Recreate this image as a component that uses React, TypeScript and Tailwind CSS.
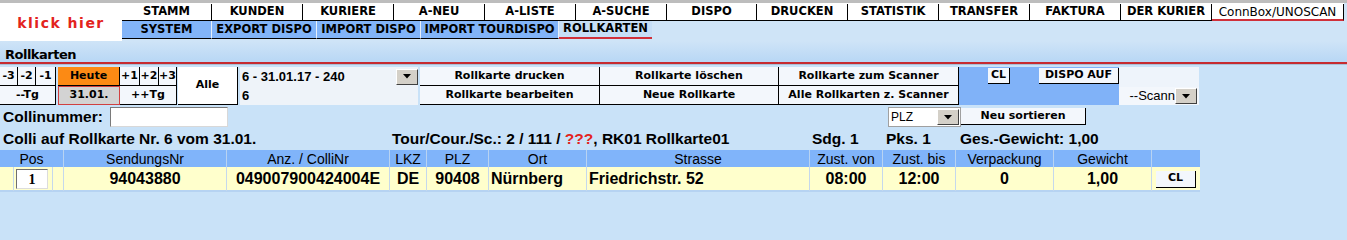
import React from "react";

const GRID =
  "grid grid-cols-[64px_163px_163px_37px_62px_98px_223px_73px_73px_98px_98px_48px]";

const Arrow = () => (
  <div className="flex h-[16px] w-[22px] shrink-0 items-center justify-center border border-t-white border-l-white border-r-[#404040] border-b-[#404040] bg-[#d4d0c8]">
    <svg width="8" height="5" viewBox="0 0 8 5">
      <polygon points="0,0 8,0 4,4.5" fill="#000" />
    </svg>
  </div>
);

const Btn = ({ children, className = "" }: { children?: React.ReactNode; className?: string }) => (
  <div
    className={`flex items-center justify-center bg-[#f3f7fc] border-r border-b border-black font-['DejaVu_Sans',sans-serif] font-bold text-[11px] text-black whitespace-nowrap ${className}`}
  >
    {children}
  </div>
);

const NAV1 = [
  { t: "STAMM", w: "w-[90px]" },
  { t: "KUNDEN", w: "w-[91px]" },
  { t: "KURIERE", w: "w-[91px]" },
  { t: "A-NEU", w: "w-[91px]" },
  { t: "A-LISTE", w: "w-[91px]" },
  { t: "A-SUCHE", w: "w-[91px]" },
  { t: "DISPO", w: "w-[90px]" },
  { t: "DRUCKEN", w: "w-[91px]" },
  { t: "STATISTIK", w: "w-[91px]" },
  { t: "TRANSFER", w: "w-[91px]" },
  { t: "FAKTURA", w: "w-[91px]" },
  { t: "DER KURIER", w: "w-[91px]" },
];

const NAV2 = [
  { t: "SYSTEM", w: "w-[90px]" },
  { t: "EXPORT DISPO", w: "w-[105px]" },
  { t: "IMPORT DISPO", w: "w-[104px]" },
  { t: "IMPORT TOURDISPO", w: "w-[138px]" },
];

const HEAD = [
  "Pos",
  "SendungsNr",
  "Anz. / ColliNr",
  "LKZ",
  "PLZ",
  "Ort",
  "Strasse",
  "Zust. von",
  "Zust. bis",
  "Verpackung",
  "Gewicht",
  "",
];

export default function App() {
  return (
    <div className="w-[1347px] h-[240px] overflow-hidden bg-[#c9e2f8] font-['Liberation_Sans',Arial,sans-serif] text-black">
      <div className="h-[3px] bg-[#bdbdbd]" />

      {/* header with logo and menu */}
      <div className="flex bg-[#cfe4f7]">
        <div className="flex h-[38px] w-[122px] items-center justify-center bg-white pt-[3px] font-['DejaVu_Sans',sans-serif] text-[14px] font-bold tracking-[1.5px] text-[#e3231d]">
          klick hier
        </div>
        <div className="flex-1">
          <div className="h-[1px] w-[1222px] bg-white" />
          <div className="flex h-[17px] w-[1222px] bg-white font-['DejaVu_Sans',sans-serif] text-[11.5px] font-bold">
            {NAV1.map((n) => (
              <div key={n.t} className={`${n.w} flex items-center justify-center border-r border-b border-black`}>
                {n.t}
              </div>
            ))}
            <div className="flex w-[132px] items-center justify-center border-r border-b-2 border-r-black border-b-[#d0303a] text-[12px] font-normal">
              ConnBox/UNOSCAN
            </div>
          </div>
          <div className="flex h-[18px] font-['DejaVu_Sans',sans-serif] text-[11.5px] font-bold">
            {NAV2.map((n) => (
              <div
                key={n.t}
                className={`${n.w} flex items-center justify-center border-r border-b border-r-[#e8f0fa] border-b-black bg-[#82b4f8]`}
              >
                {n.t}
              </div>
            ))}
            <div className="flex w-[93px] items-center justify-center border-b-2 border-[#d0303a] bg-[#c6def6]">
              ROLLKARTEN
            </div>
          </div>
        </div>
      </div>

      {/* title */}
      <div className="flex h-[21px] items-end bg-gradient-to-b from-[#cfe4f7] to-[#b8d7f5] pb-[1px] pl-[5px] font-['DejaVu_Sans',sans-serif] text-[13px] font-bold leading-none tracking-[-0.5px]">
        Rollkarten
      </div>
      <div className="h-[2px] bg-[#c62a30]" />
      <div className="h-[1px] bg-[#a9bfd6]" />

      {/* toolbar */}
      <div className="mt-[2px] flex h-[38px]">
        <div className="flex w-[177px] flex-col">
          <div className="flex h-[19px]">
            <Btn className="w-[18px]">-3</Btn>
            <Btn className="w-[18px]">-2</Btn>
            <Btn className="w-[20px]">-1</Btn>
            <div className="w-[2px]" />
            <Btn className="w-[62px] bg-[#fc8a14]">Heute</Btn>
            <Btn className="w-[20px]">+1</Btn>
            <Btn className="w-[19px]">+2</Btn>
            <Btn className="w-[18px]">+3</Btn>
          </div>
          <div className="flex h-[19px]">
            <Btn className="w-[56px]">--Tg</Btn>
            <div className="w-[2px]" />
            <div className="flex w-[62px] items-center justify-center border border-[#d04040] bg-[#d3d3d3] font-['DejaVu_Sans',sans-serif] text-[11px] font-bold">
              31.01.
            </div>
            <Btn className="w-[57px]">++Tg</Btn>
          </div>
        </div>
        <div className="w-[1px]" />
        <Btn className="w-[60px] bg-white">Alle</Btn>
        <div className="w-[2px]" />
        <div className="flex w-[178px] flex-col bg-[#eef3f9] text-[13px] font-bold">
          <div className="flex h-[19px] items-center justify-between pl-[2px]">
            <span>6 - 31.01.17 - 240</span>
            <Arrow />
          </div>
          <div className="flex h-[19px] items-center pl-[2px]">6</div>
        </div>
        <div className="w-[2px]" />
        <div className="flex flex-col">
          <div className="flex h-[19px]">
            <Btn className="w-[180px]">Rollkarte drucken</Btn>
            <Btn className="w-[179px]">Rollkarte löschen</Btn>
            <Btn className="w-[180px]">Rollkarte zum Scanner</Btn>
          </div>
          <div className="flex h-[19px]">
            <Btn className="w-[180px]">Rollkarte bearbeiten</Btn>
            <Btn className="w-[179px]">Neue Rollkarte</Btn>
            <Btn className="w-[180px]">Alle Rollkarten z. Scanner</Btn>
          </div>
        </div>
        <div className="flex w-[160px] flex-col bg-[#80b2f8]">
          <div className="flex h-[19px] items-start pt-[1px]">
            <Btn className="ml-[29px] h-[16px] w-[22px]">CL</Btn>
            <Btn className="ml-[29px] h-[16px] w-[80px]">DISPO AUF</Btn>
          </div>
        </div>
        <div className="flex w-[80px] flex-col">
          <div className="h-[20px] bg-[#eef4fb]" />
          <div className="flex h-[18px] items-center bg-[#f3f7fc] pl-[2px] pr-[2px] text-[13px]">
            <span className="flex-1 whitespace-nowrap text-right">--Scann</span>
            <Arrow />
          </div>
        </div>
      </div>

      {/* Collinummer */}
      <div className="mt-[2px] flex h-[20px] items-center">
        <div className="w-[110px] pl-[3px] text-[15.5px] font-bold">Collinummer:</div>
        <div className="h-[20px] w-[118px] border border-t-[#7a7a7a] border-l-[#7a7a7a] border-r-[#d8d8d8] border-b-[#d8d8d8] bg-white" />
        <div className="ml-[660px] flex h-[20px] w-[73px] items-center justify-between border border-[#a0a0a0] bg-white pl-[2px] pr-[1px] text-[12px]">
          <span>PLZ</span>
          <Arrow />
        </div>
        <Btn className="mt-[1px] h-[17px] w-[125px] self-start">Neu sortieren</Btn>
      </div>

      {/* info */}
      <div className={`${GRID} h-[23px] w-[1200px] items-center text-[15.5px] font-bold`}>
        <div className="col-span-3 pl-[3px]">Colli auf Rollkarte Nr. 6 vom 31.01.</div>
        <div className="col-span-4 whitespace-nowrap pl-[2px]">
          Tour/Cour./Sc.: 2 / 111 / <span className="text-[#e3231d]">???</span>, RK01 Rollkarte01
        </div>
        <div className="pl-[2px]">Sdg. 1</div>
        <div className="pl-[3px]">Pks. 1</div>
        <div className="col-span-3 pl-[4px]">Ges.-Gewicht: 1,00</div>
      </div>

      {/* table */}
      <div className="w-[1200px] border-b-2 border-[#b6d3f2]">
        <div className={`${GRID} h-[17px] bg-[#80b4fa] text-[14px] leading-none`}>
          {HEAD.map((h, i) => (
            <div
              key={i}
              className={`flex items-center justify-center ${i < HEAD.length - 1 ? "border-r border-[#b8d3f2]" : ""}`}
            >
              {h}
            </div>
          ))}
        </div>
        <div className={`${GRID} h-[23px] bg-[#ffffcc] text-[16px] font-bold`}>
          <div className="flex border-r border-[#c5d8ec]">
            <div className="w-[14px] border-r border-[#c5d8ec]" />
            <div className="flex flex-1 items-center pl-[2px]">
              <div className="flex h-[20px] w-[32px] items-center justify-center border border-t-[#6f6f6f] border-l-[#6f6f6f] border-r-[#dcdcdc] border-b-[#dcdcdc] bg-white font-['Liberation_Serif',serif] text-[14px] font-bold">
                1
              </div>
            </div>
            <div className="w-[11px] border-l border-[#c5d8ec]" />
          </div>
          <div className="flex items-center justify-center border-r border-[#c5d8ec]">94043880</div>
          <div className="flex items-center justify-center border-r border-[#c5d8ec]">049007900424004E</div>
          <div className="flex items-center justify-center border-r border-[#c5d8ec]">DE</div>
          <div className="flex items-center justify-center border-r border-[#c5d8ec]">90408</div>
          <div className="flex items-center border-r border-[#c5d8ec] pl-[2px]">Nürnberg</div>
          <div className="flex items-center border-r border-[#c5d8ec] pl-[2px]">Friedrichstr. 52</div>
          <div className="flex items-center justify-center border-r border-[#c5d8ec]">08:00</div>
          <div className="flex items-center justify-center border-r border-[#c5d8ec]">12:00</div>
          <div className="flex items-center justify-center border-r border-[#c5d8ec]">0</div>
          <div className="flex items-center justify-center border-r border-[#c5d8ec]">1,00</div>
          <div className="flex items-center pl-[4px]">
            <Btn className="h-[17px] w-[40px]">CL</Btn>
          </div>
        </div>
      </div>
    </div>
  );
}
